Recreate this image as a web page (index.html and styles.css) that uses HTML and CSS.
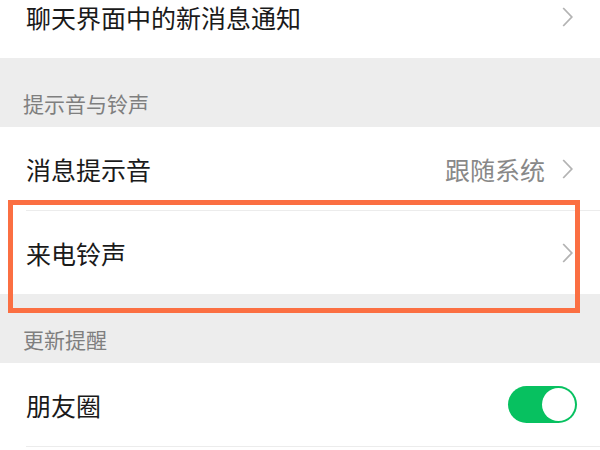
FILE: index.html
```html
<!DOCTYPE html>
<html lang="zh-CN">
<head>
    <meta charset="UTF-8">
    <meta name="viewport" content="width=device-width, initial-scale=1.0">
    <title>新消息通知</title>
    <link rel="stylesheet" href="styles.css">
</head>
<body>
    <div class="settings">
        <div class="cell first">
            <div class="cell-inner">
                <span class="cell-title">聊天界面中的新消息通知</span>
                <span class="arrow">
                    <svg width="11" height="20" viewBox="0 0 11 20"><polyline points="1.2,1 9.8,10 1.2,19" fill="none" stroke="#b3b3b3" stroke-width="1.8"/></svg>
                </span>
            </div>
        </div>

        <div class="group-title">提示音与铃声</div>

        <div class="cell">
            <div class="cell-inner line">
                <span class="cell-title">消息提示音</span>
                <span class="cell-value">跟随系统</span>
                <span class="arrow">
                    <svg width="11" height="20" viewBox="0 0 11 20"><polyline points="1.2,1 9.8,10 1.2,19" fill="none" stroke="#b3b3b3" stroke-width="1.8"/></svg>
                </span>
            </div>
        </div>
        <div class="cell highlighted">
            <div class="cell-inner">
                <span class="cell-title">来电铃声</span>
                <span class="arrow">
                    <svg width="11" height="20" viewBox="0 0 11 20"><polyline points="1.2,1 9.8,10 1.2,19" fill="none" stroke="#b3b3b3" stroke-width="1.8"/></svg>
                </span>
            </div>
            <div class="mark"></div>
        </div>

        <div class="group-title">更新提醒</div>

        <div class="cell">
            <div class="cell-inner line">
                <span class="cell-title">朋友圈</span>
                <span class="switch on"><span class="knob"></span></span>
            </div>
        </div>
    </div>
</body>
</html>
```

FILE: styles.css
```css
* {
    box-sizing: border-box;
    margin: 0;
    padding: 0;
}
body {
    font-family: 'Noto Sans CJK SC', 'Noto Sans', sans-serif;
    background-color: #fff;
    color: #1a1a1a;
}
.settings {
    width: 600px;
    height: 450px;
    overflow: hidden;
}
.cell {
    position: relative;
    background-color: #fff;
}
.cell.first {
    margin-top: -25px;
}
.cell-inner {
    display: flex;
    align-items: center;
    height: 83px;
    margin-left: 26px;
    padding-right: 27px;
}
.cell-inner.line {
    height: 84px;
    border-bottom: 1px solid #ececec;
}
.cell-title {
    flex: 1;
    font-size: 25px;
    line-height: 30px;
}
.cell-value {
    font-size: 25px;
    line-height: 30px;
    color: #888;
    margin-right: 17px;
}
.arrow {
    display: flex;
    width: 11px;
    height: 20px;
}
.group-title {
    background-color: #ededed;
    height: 69px;
    padding: 30px 0 9px 23px;
    font-size: 21px;
    line-height: 30px;
    color: #7f7f7f;
}
.switch {
    display: flex;
    justify-content: flex-start;
    width: 69px;
    height: 37px;
    padding: 2px;
    margin-right: -4px;
    border-radius: 19px;
    background-color: #e5e5e5;
}
.switch.on {
    justify-content: flex-end;
    background-color: #07c160;
}
.knob {
    width: 33px;
    height: 33px;
    border-radius: 50%;
    background-color: #fff;
}
.mark {
    position: absolute;
    top: -11px;
    left: 8px;
    width: 572px;
    height: 113px;
    border: 5px solid #fb6f42;
}
```
